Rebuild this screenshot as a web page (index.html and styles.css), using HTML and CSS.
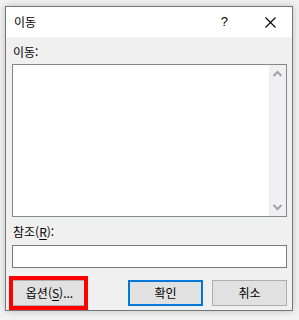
FILE: index.html
```html
<!DOCTYPE html>
<html lang="ko">
<head>
<meta charset="utf-8">
<link rel="stylesheet" href="styles.css">
</head>
<body>
<div class="window">
  <div class="titlebar">
    <span class="title">이동</span>
    <span class="help">?</span>
    <svg class="close" width="11" height="11" viewBox="0 0 11 11"><path d="M0.5 0.5 L10.5 10.5 M10.5 0.5 L0.5 10.5" stroke="#000" stroke-width="1.1" fill="none"/></svg>
  </div>
  <div class="content">
    <div class="label">이동:</div>
    <div class="listbox">
      <div class="list-area"></div>
      <div class="scrollbar">
        <svg width="17" height="17" viewBox="0 0 17 17"><polyline points="4.5,11 8.5,7 12.5,11" stroke="#a3a3a3" stroke-width="2" fill="none"/></svg>
        <svg width="17" height="17" viewBox="0 0 17 17"><polyline points="4.5,6 8.5,10 12.5,6" stroke="#a3a3a3" stroke-width="2" fill="none"/></svg>
      </div>
    </div>
    <div class="label label-ref">참조(<u>R</u>):</div>
    <div class="input"></div>
    <div class="buttons">
      <div class="btn-wrap">
        <div class="btn btn-options">옵션(<u>S</u>)...</div>
        <div class="highlight"></div>
      </div>
      <div class="spacer"></div>
      <div class="btn btn-default">확인</div>
      <div class="btn">취소</div>
    </div>
  </div>
</div>
</body>
</html>
```
FILE: styles.css
```css
html, body {
  margin: 0;
  padding: 0;
}
body {
  background: #f2f2f2;
  width: 299px;
  height: 320px;
  overflow: hidden;
  font-family: "Noto Sans CJK KR", "Noto Sans", sans-serif;
  font-size: 12px;
  color: #000;
}
.window {
  margin: 6px 0 0 5px;
  width: 288px;
  height: 305px;
  box-sizing: border-box;
  border: 1px solid #777;
  background: #f0f0f0;
  box-shadow: 0 0 7px rgba(0, 0, 0, 0.22);
  display: flex;
  flex-direction: column;
}
.titlebar {
  height: 30px;
  background: #fff;
  display: flex;
  align-items: center;
  flex-shrink: 0;
}
.title {
  margin-left: 8px;
  font-size: 12px;
  line-height: 16px;
  flex: 1;
}
.help {
  font-family: "Liberation Sans", sans-serif;
  font-size: 13px;
  line-height: 16px;
  margin-right: 37px;
}
.close {
  margin-right: 16px;
  display: block;
}
.content {
  flex: 1;
  padding: 7px 5px 0 6px;
  display: flex;
  flex-direction: column;
}
.label {
  line-height: 16px;
  height: 16px;
  margin-left: 1px;
}
.label u, .btn u {
  text-underline-offset: 2px;
}
.listbox {
  margin-top: 4px;
  height: 153px;
  box-sizing: border-box;
  border: 1px solid #828790;
  background: #fff;
  display: flex;
}
.list-area {
  flex: 1;
}
.scrollbar {
  width: 17px;
  background: #f0f0f0;
  display: flex;
  flex-direction: column;
  justify-content: space-between;
}
.scrollbar svg {
  display: block;
}
.label-ref {
  margin-top: 7px;
}
.input {
  margin-top: 5px;
  height: 23px;
  box-sizing: border-box;
  border: 1px solid #7a7a7a;
  background: #fff;
}
.buttons {
  margin-top: 12px;
  display: flex;
  gap: 9px;
}
.spacer {
  flex: 1;
}
.btn {
  width: 75px;
  height: 26px;
  box-sizing: border-box;
  border: 1px solid #adadad;
  background: #e1e1e1;
  display: flex;
  align-items: center;
  justify-content: center;
  line-height: 16px;
}
.btn-default {
  border: 2px solid #0078d7;
}
.btn-wrap {
  position: relative;
  width: 73px;
}
.btn-options {
  width: 75px;
}
.highlight {
  position: absolute;
  left: -3px;
  top: -4px;
  width: 79px;
  height: 34px;
  box-sizing: border-box;
  border: 4px solid #ff0000;
}
```
